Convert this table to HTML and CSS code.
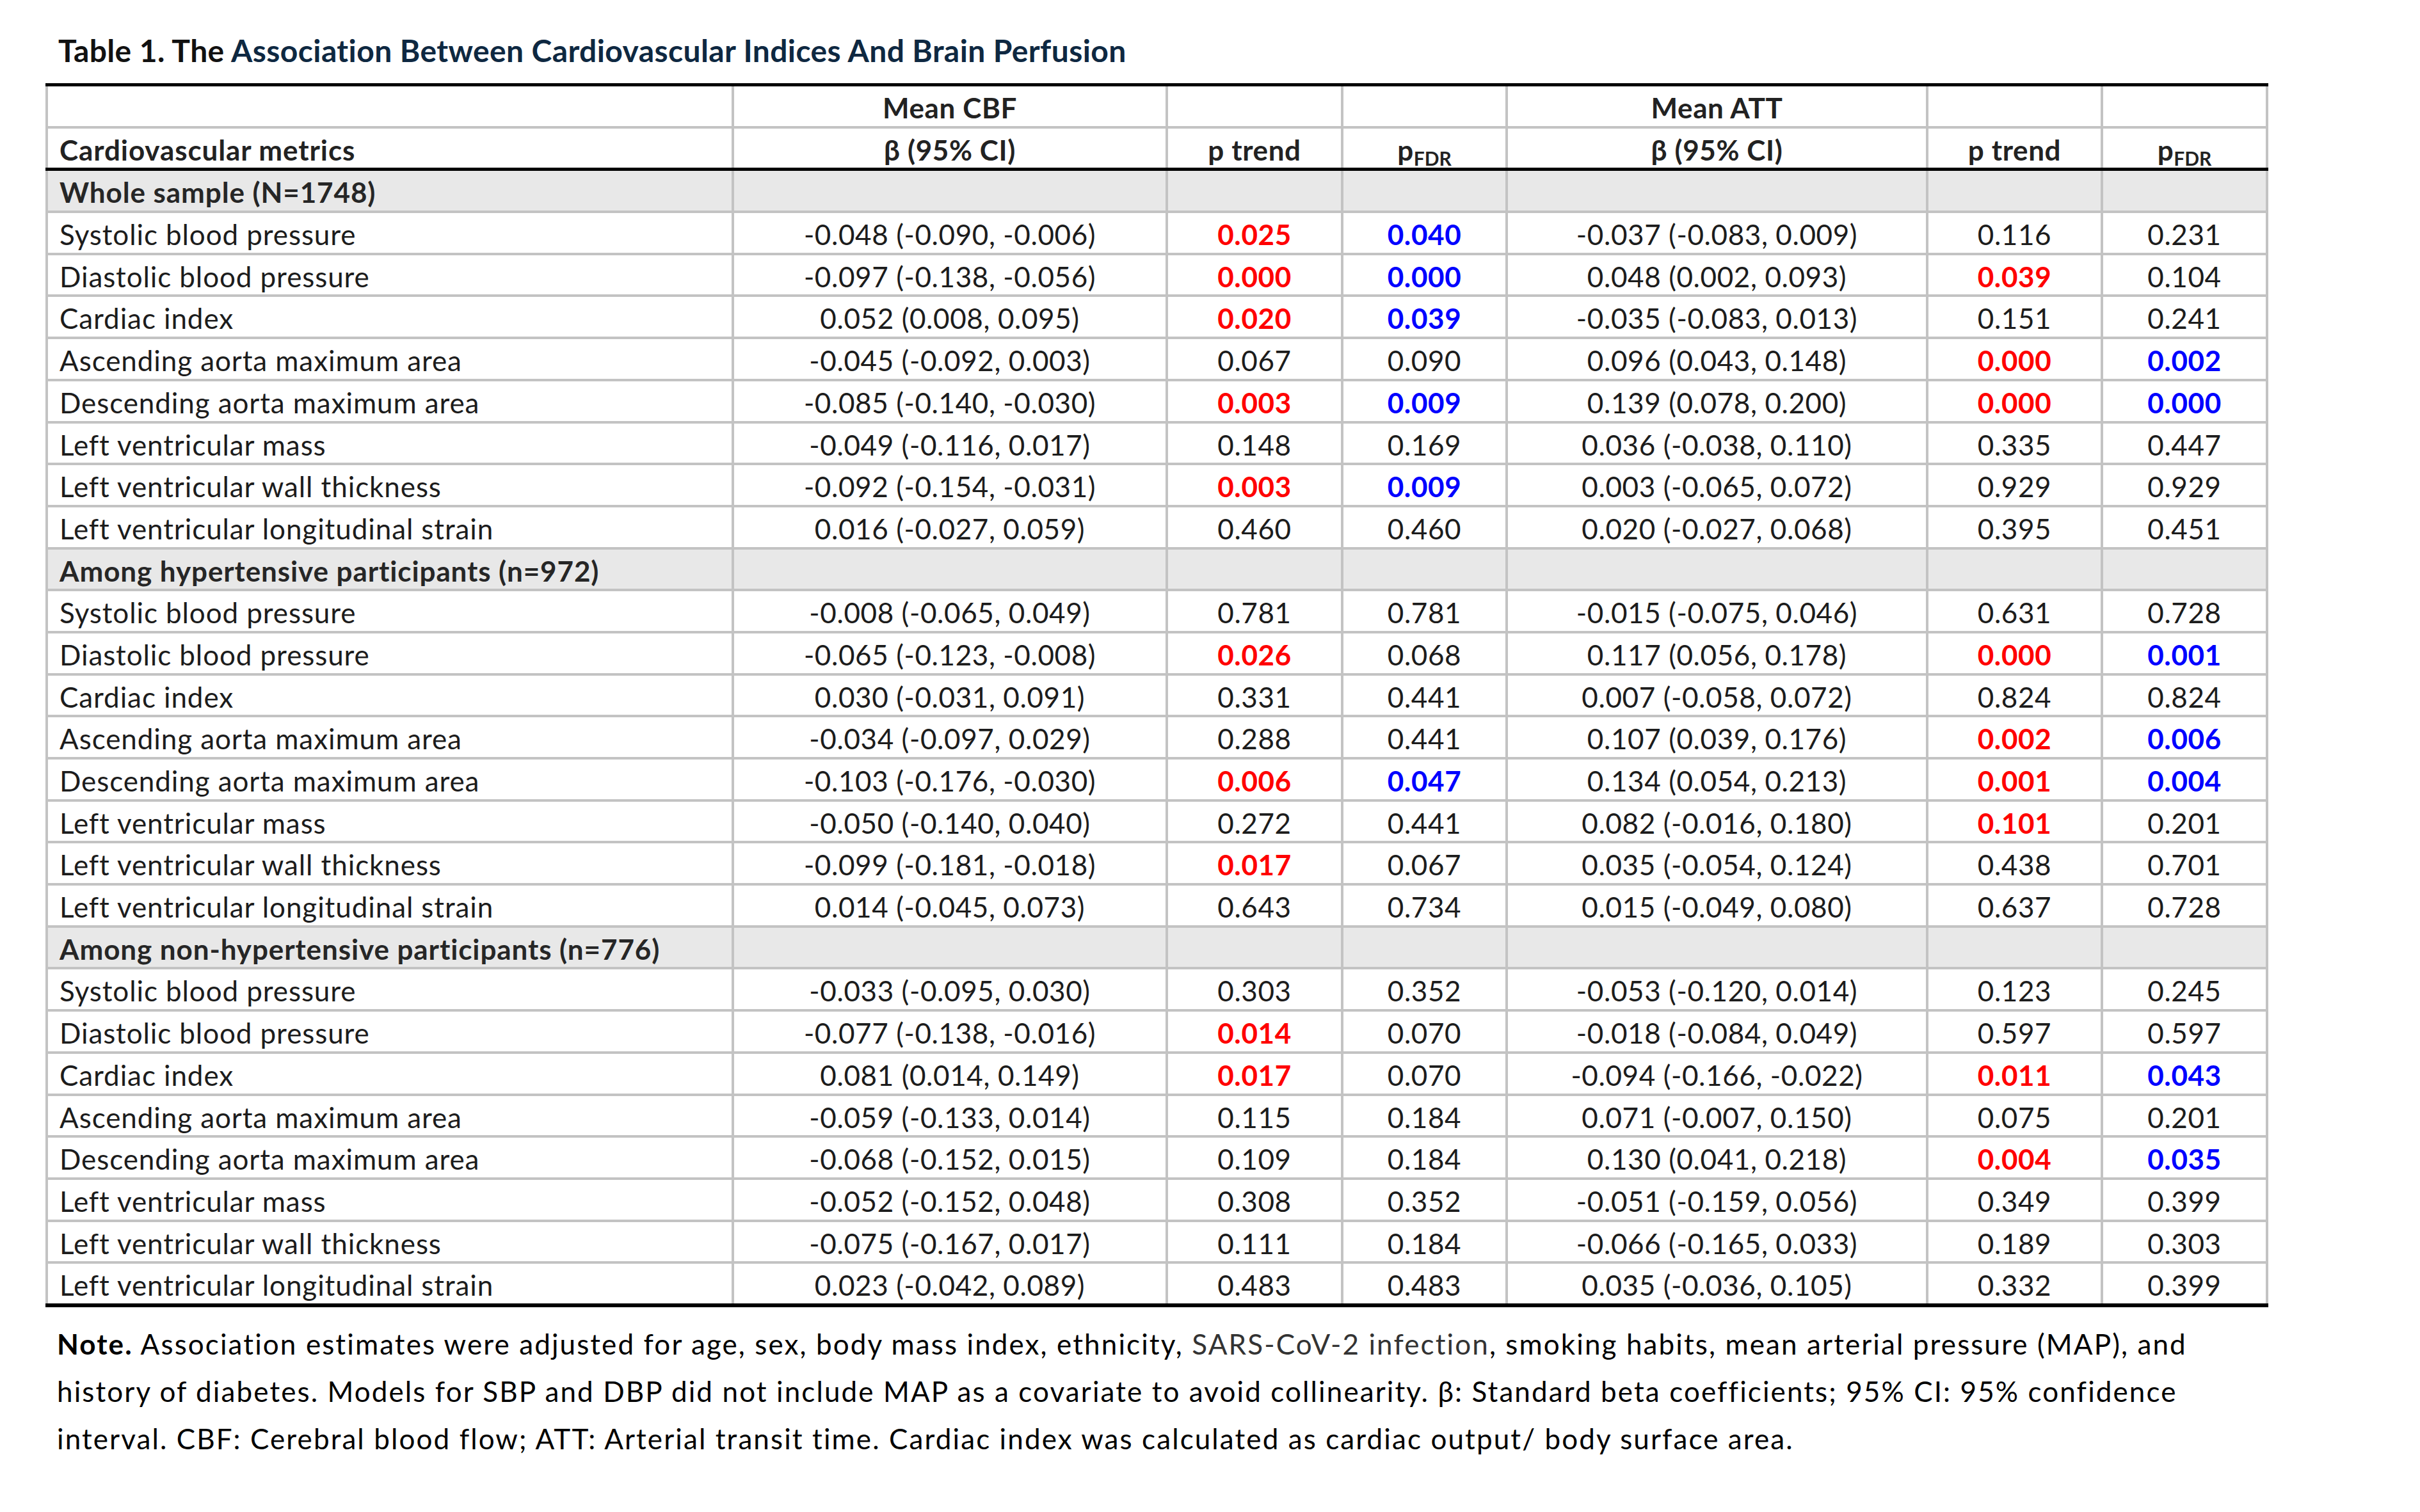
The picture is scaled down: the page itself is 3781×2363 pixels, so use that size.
FILE: index.html
```html
<!DOCTYPE html>
<html lang="en">
<head>
<meta charset="utf-8">
<title>Table 1</title>
<link rel="stylesheet" href="styles.css">
</head>
<body>
<div class="page">
  <h1 class="title">Table 1. The <span class="title-accent">Association Between Cardiovascular Indices And Brain Perfusion</span></h1>
  <table class="data">
    <colgroup>
      <col class="c-metric"><col class="c-beta"><col class="c-p"><col class="c-fdr"><col class="c-beta2"><col class="c-p2"><col class="c-fdr2">
    </colgroup>
    <thead>
      <tr class="h1">
        <th></th><th>Mean CBF</th><th></th><th></th><th>Mean ATT</th><th></th><th></th>
      </tr>
      <tr class="h2">
        <th class="left">Cardiovascular metrics</th><th>β (95% CI)</th><th>p trend</th><th>p<sub>FDR</sub></th><th>β (95% CI)</th><th>p trend</th><th>p<sub>FDR</sub></th>
      </tr>
    </thead>
    <tbody>
      <tr class="group"><td>Whole sample (N=1748)</td><td></td><td></td><td></td><td></td><td></td><td></td></tr>
      <tr><td>Systolic blood pressure</td><td>-0.048 (-0.090, -0.006)</td><td class="red">0.025</td><td class="blue">0.040</td><td>-0.037 (-0.083, 0.009)</td><td>0.116</td><td>0.231</td></tr>
      <tr><td>Diastolic blood pressure</td><td>-0.097 (-0.138, -0.056)</td><td class="red">0.000</td><td class="blue">0.000</td><td>0.048 (0.002, 0.093)</td><td class="red">0.039</td><td>0.104</td></tr>
      <tr><td>Cardiac index</td><td>0.052 (0.008, 0.095)</td><td class="red">0.020</td><td class="blue">0.039</td><td>-0.035 (-0.083, 0.013)</td><td>0.151</td><td>0.241</td></tr>
      <tr><td>Ascending aorta maximum area</td><td>-0.045 (-0.092, 0.003)</td><td>0.067</td><td>0.090</td><td>0.096 (0.043, 0.148)</td><td class="red">0.000</td><td class="blue">0.002</td></tr>
      <tr><td>Descending aorta maximum area</td><td>-0.085 (-0.140, -0.030)</td><td class="red">0.003</td><td class="blue">0.009</td><td>0.139 (0.078, 0.200)</td><td class="red">0.000</td><td class="blue">0.000</td></tr>
      <tr><td>Left ventricular mass</td><td>-0.049 (-0.116, 0.017)</td><td>0.148</td><td>0.169</td><td>0.036 (-0.038, 0.110)</td><td>0.335</td><td>0.447</td></tr>
      <tr><td>Left ventricular wall thickness</td><td>-0.092 (-0.154, -0.031)</td><td class="red">0.003</td><td class="blue">0.009</td><td>0.003 (-0.065, 0.072)</td><td>0.929</td><td>0.929</td></tr>
      <tr><td>Left ventricular longitudinal strain</td><td>0.016 (-0.027, 0.059)</td><td>0.460</td><td>0.460</td><td>0.020 (-0.027, 0.068)</td><td>0.395</td><td>0.451</td></tr>
      <tr class="group"><td>Among hypertensive participants (n=972)</td><td></td><td></td><td></td><td></td><td></td><td></td></tr>
      <tr><td>Systolic blood pressure</td><td>-0.008 (-0.065, 0.049)</td><td>0.781</td><td>0.781</td><td>-0.015 (-0.075, 0.046)</td><td>0.631</td><td>0.728</td></tr>
      <tr><td>Diastolic blood pressure</td><td>-0.065 (-0.123, -0.008)</td><td class="red">0.026</td><td>0.068</td><td>0.117 (0.056, 0.178)</td><td class="red">0.000</td><td class="blue">0.001</td></tr>
      <tr><td>Cardiac index</td><td>0.030 (-0.031, 0.091)</td><td>0.331</td><td>0.441</td><td>0.007 (-0.058, 0.072)</td><td>0.824</td><td>0.824</td></tr>
      <tr><td>Ascending aorta maximum area</td><td>-0.034 (-0.097, 0.029)</td><td>0.288</td><td>0.441</td><td>0.107 (0.039, 0.176)</td><td class="red">0.002</td><td class="blue">0.006</td></tr>
      <tr><td>Descending aorta maximum area</td><td>-0.103 (-0.176, -0.030)</td><td class="red">0.006</td><td class="blue">0.047</td><td>0.134 (0.054, 0.213)</td><td class="red">0.001</td><td class="blue">0.004</td></tr>
      <tr><td>Left ventricular mass</td><td>-0.050 (-0.140, 0.040)</td><td>0.272</td><td>0.441</td><td>0.082 (-0.016, 0.180)</td><td class="red">0.101</td><td>0.201</td></tr>
      <tr><td>Left ventricular wall thickness</td><td>-0.099 (-0.181, -0.018)</td><td class="red">0.017</td><td>0.067</td><td>0.035 (-0.054, 0.124)</td><td>0.438</td><td>0.701</td></tr>
      <tr><td>Left ventricular longitudinal strain</td><td>0.014 (-0.045, 0.073)</td><td>0.643</td><td>0.734</td><td>0.015 (-0.049, 0.080)</td><td>0.637</td><td>0.728</td></tr>
      <tr class="group"><td>Among non-hypertensive participants (n=776)</td><td></td><td></td><td></td><td></td><td></td><td></td></tr>
      <tr><td>Systolic blood pressure</td><td>-0.033 (-0.095, 0.030)</td><td>0.303</td><td>0.352</td><td>-0.053 (-0.120, 0.014)</td><td>0.123</td><td>0.245</td></tr>
      <tr><td>Diastolic blood pressure</td><td>-0.077 (-0.138, -0.016)</td><td class="red">0.014</td><td>0.070</td><td>-0.018 (-0.084, 0.049)</td><td>0.597</td><td>0.597</td></tr>
      <tr><td>Cardiac index</td><td>0.081 (0.014, 0.149)</td><td class="red">0.017</td><td>0.070</td><td>-0.094 (-0.166, -0.022)</td><td class="red">0.011</td><td class="blue">0.043</td></tr>
      <tr><td>Ascending aorta maximum area</td><td>-0.059 (-0.133, 0.014)</td><td>0.115</td><td>0.184</td><td>0.071 (-0.007, 0.150)</td><td>0.075</td><td>0.201</td></tr>
      <tr><td>Descending aorta maximum area</td><td>-0.068 (-0.152, 0.015)</td><td>0.109</td><td>0.184</td><td>0.130 (0.041, 0.218)</td><td class="red">0.004</td><td class="blue">0.035</td></tr>
      <tr><td>Left ventricular mass</td><td>-0.052 (-0.152, 0.048)</td><td>0.308</td><td>0.352</td><td>-0.051 (-0.159, 0.056)</td><td>0.349</td><td>0.399</td></tr>
      <tr><td>Left ventricular wall thickness</td><td>-0.075 (-0.167, 0.017)</td><td>0.111</td><td>0.184</td><td>-0.066 (-0.165, 0.033)</td><td>0.189</td><td>0.303</td></tr>
      <tr><td>Left ventricular longitudinal strain</td><td>0.023 (-0.042, 0.089)</td><td>0.483</td><td>0.483</td><td>0.035 (-0.036, 0.105)</td><td>0.332</td><td>0.399</td></tr>
    </tbody>
  </table>
  <p class="note"><b>Note.</b> Association estimates were adjusted for age, sex, body mass index, ethnicity, <span class="muted">SARS-CoV-2 infection</span>, smoking habits, mean arterial pressure (MAP), and<br>history of diabetes. Models for SBP and DBP did not include MAP as a covariate to avoid collinearity. β: Standard beta coefficients; 95% CI: 95% confidence<br>interval. CBF: Cerebral blood flow; ATT: Arterial transit time. Cardiac index was calculated as cardiac output/ body surface area.</p>
</div>
</body>
</html>
```
FILE: styles.css
```css
html, body {
  margin: 0;
  padding: 0;
  background: #ffffff;
}

.page {
  padding: 51px 0 0 71px;
  font-family: "Lato", "Liberation Sans", sans-serif;
  font-size: 44px;
  color: #1a1a1a;
}

.title {
  margin: 0 0 0 20px;
  font-size: 48px;
  font-weight: 700;
  line-height: 56px;
  letter-spacing: 0.4px;
  color: #111111;
}

.title-accent {
  color: #0e2841;
}

.data {
  margin-top: 23px;
  border-collapse: collapse;
  table-layout: fixed;
  width: 3469px;
}

.c-metric { width: 1072px; }
.c-beta { width: 678px; }
.c-p { width: 274px; }
.c-fdr { width: 257px; }
.c-beta2 { width: 657px; }
.c-p2 { width: 273px; }
.c-fdr2 { width: 258px; }

.data th,
.data td {
  border: 4px solid #c3c3c3;
  padding: 7px 18px 1.7px;
  line-height: 53px;
  text-align: center;
  white-space: nowrap;
  font-weight: 400;
  letter-spacing: 0.6px;
  color: #1c1c1c;
}

.data td:first-child,
.data th.left {
  letter-spacing: 0.9px;
}

.data th {
  font-weight: 700;
  color: #222222;
}

.data td:first-child,
.data th.left {
  text-align: left;
}

.data tr.h1 th {
  border-top: 5px solid #000000;
}

.data tr.h2 th {
  border-bottom: 5px solid #000000;
}

.data tbody tr:last-child td {
  border-bottom: 6px solid #000000;
}

.data sub {
  font-size: 30px;
  line-height: 0;
  vertical-align: -8px;
  letter-spacing: 0;
}

.data tr.group td {
  background: #e8e8e8;
  font-weight: 700;
  color: #262626;
}

.data td.red {
  color: #ff0000;
  font-weight: 700;
}

.data td.blue {
  color: #0000ff;
  font-weight: 700;
}

.note {
  margin: 20px 0 0 18px;
  line-height: 74px;
  letter-spacing: 2.1px;
  color: #000000;
}

.note b {
  font-weight: 700;
}

.muted {
  color: #333333;
}
```
